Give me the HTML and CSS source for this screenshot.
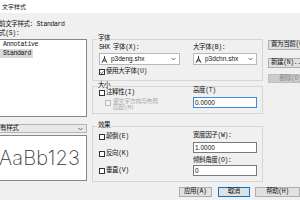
FILE: index.html
```html
<!DOCTYPE html>
<html lang="zh">
<head>
<meta charset="utf-8">
<link rel="stylesheet" href="styles.css">
</head>
<body>
<div class="titlebar">文字样式</div>
<div class="cols">
  <div class="left">
    <div class="lbl">当前文字样式: Standard</div>
    <div class="lbl">样式(S):</div>
    <div class="list">
      <div class="item">Annotative</div>
      <div class="item sel">Standard</div>
    </div>
    <div class="combo allstyles"><span class="ctext">所有样式</span><svg class="chev" width="5" height="4" viewBox="0 0 5 4"><polyline points="0.5,1 2.5,3 4.5,1" fill="none" stroke="#444" stroke-width="0.8"/></svg></div>
    <div class="preview">AaBb123</div>
  </div>

  <div class="mid">
    <div class="group g-font">
      <div class="legend">字体</div>
      <div class="grow">
        <div class="ga">
          <div class="flabel">SHX 字体(X):</div>
          <div class="combo fcombo"><svg class="shx" width="7" height="7" viewBox="0 0 7 7"><path d="M3.5 0.3V2M1 6.7L3.5 2L6 6.7M2.1 4.9H4.9M3 1.2H4" fill="none" stroke="#222" stroke-width="0.9"/></svg><span class="ctext">p3deng.shx</span><svg class="chev" width="5" height="4" viewBox="0 0 5 4"><polyline points="0.5,1 2.5,3 4.5,1" fill="none" stroke="#444" stroke-width="0.8"/></svg></div>
          <div class="chk c-big"><span class="box"><svg width="5" height="5" viewBox="0 0 5 5"><polyline points="0.7,2.5 2,3.9 4.4,1" fill="none" stroke="#222" stroke-width="0.9"/></svg></span>使用大字体(U)</div>
        </div>
        <div class="gb">
          <div class="flabel">大字体(B):</div>
          <div class="combo fcombo"><svg class="shx" width="7" height="7" viewBox="0 0 7 7"><path d="M3.5 0.3V2M1 6.7L3.5 2L6 6.7M2.1 4.9H4.9M3 1.2H4" fill="none" stroke="#222" stroke-width="0.9"/></svg><span class="ctext">p3dchn.shx</span><svg class="chev" width="5" height="4" viewBox="0 0 5 4"><polyline points="0.5,1 2.5,3 4.5,1" fill="none" stroke="#444" stroke-width="0.8"/></svg></div>
        </div>
      </div>
    </div>

    <div class="group g-size">
      <div class="legend">大小</div>
      <div class="grow">
        <div class="ga">
          <div class="chk c-anno"><span class="box"></span>注释性(I)</div>
          <div class="chk c-dis"><span class="box dis"></span><span class="distext">使文字方向与布局<br>匹配(M)</span></div>
        </div>
        <div class="gb">
          <div class="flabel f-h">高度(T)</div>
          <div class="input focus i-h">0.0000</div>
        </div>
      </div>
    </div>

    <div class="group g-eff">
      <div class="legend">效果</div>
      <div class="grow">
        <div class="ga">
          <div class="chk e1"><span class="box"></span>颠倒(E)</div>
          <div class="chk e2"><span class="box"></span>反向(K)</div>
          <div class="chk e3"><span class="box"></span>垂直(V)</div>
        </div>
        <div class="gb">
          <div class="flabel f-w">宽度因子(W):</div>
          <div class="input i-w">1.0000</div>
          <div class="flabel f-o">倾斜角度(O):</div>
          <div class="input i-o">0</div>
        </div>
      </div>
    </div>
  </div>

  <div class="right">
    <div class="btn b-cur">置为当前(C)</div>
    <div class="btn b-new">新建(N)...</div>
    <div class="btn b-del disabled">删除(D)</div>
  </div>
</div>

<div class="footer">
  <div class="btn f-apply">应用(A)</div>
  <div class="btn f-cancel">取消</div>
  <div class="btn f-help">帮助(H)</div>
</div>
</body>
</html>
```

FILE: styles.css
```css
* { box-sizing: border-box; margin: 0; padding: 0; }
html, body { width: 300px; height: 200px; overflow: hidden; }
body {
  background: #f0f0f0;
  font-family: "Liberation Mono", "Noto Sans CJK SC", monospace;
  font-size: 6.5px;
  letter-spacing: -0.4px;
  line-height: 8px;
  color: #111;
}
.titlebar {
  height: 13px;
  background: #fff;
  padding-left: 2px;
  font-family: "Noto Sans CJK SC", sans-serif;
  font-size: 6px;
  letter-spacing: 0;
  line-height: 13px;
}
.cols { display: flex; align-items: flex-start; height: 169px; }

/* left column */
.left { width: 95px; margin-left: -8px; padding-top: 7px; flex: none; }
.lbl { height: 9px; line-height: 9px; white-space: nowrap; padding-left: 1px; }
.list {
  margin-top: 1px;
  height: 78px;
  background: #fff;
  border: 1px solid #828790;
}
.item { height: 9px; line-height: 9px; padding-left: 10px; white-space: nowrap; }
.item.sel { display: table; padding-right: 2px; background: #d9d9d9; }

.combo {
  display: flex;
  align-items: center;
  border: 1px solid #a6a6a6;
  background: #fff;
  white-space: nowrap;
}
.combo .ctext { flex: 1; }
.combo .chev { flex: none; margin-right: 3px; }
.allstyles {
  margin-top: 7px;
  height: 9px;
  background: #e8e8e8;
  border-color: #b4b4b4;
  padding-left: 1px;
}
.preview {
  margin-top: 2px;
  height: 46px;
  background: #fff;
  border: 1px solid #828790;
  font-family: "Inter", "DejaVu Sans", sans-serif;
  font-weight: 200;
  font-size: 20px;
  letter-spacing: 0.2px;
  line-height: 44px;
  text-align: center;
  color: #3a3a3a;
}

/* middle groups */
.mid { width: 171px; margin-left: 5px; flex: none; }
.group { border: 1px solid #d5d5d5; }
.legend {
  width: max-content;
  height: 8px;
  line-height: 8px;
  margin: -5px 0 0 4px;
  padding: 0 1px;
  background: #f0f0f0;
}
.grow { display: flex; padding-left: 6px; gap: 13px; }
.ga { width: 81px; flex: none; }
.gb { width: 64px; flex: none; }
.flabel { height: 8px; line-height: 8px; white-space: nowrap; }

.g-font { margin-top: 26px; height: 42px; }
.g-font .flabel { margin-top: 1px; }
.fcombo { margin-top: 1px; height: 12px; padding-left: 1px; border-color: #b9b9b9; }
.fcombo .shx { flex: none; margin-right: 3px; }
.fcombo .ctext { font-family: "Liberation Sans", "Noto Sans CJK SC", sans-serif; letter-spacing: 0; }
.chk { display: flex; align-items: center; height: 8px; white-space: nowrap; }
.box {
  flex: none;
  width: 6px;
  height: 6px;
  border: 1px solid #333;
  background: #fff;
  margin-right: 1px;
  display: flex;
  align-items: center;
  justify-content: center;
}
.box svg { display: block; }
.box.dis { border-color: #bcbcbc; background: #f4f4f4; }
.c-big { margin-top: 2px; height: 10px; }

.g-size { margin-top: 5px; height: 28px; }
.c-anno { margin-top: -1px; }
.c-dis { margin-top: 2px; align-items: flex-start; padding-left: 6px; height: 12px; }
.c-dis .box { margin-top: 1px; margin-right: 2px; }
.distext { color: #a8a8a8; line-height: 6px; font-size: 6px; }
.f-h { margin-top: -3px; }
.input {
  height: 11px;
  border: 1px solid #7a7a7a;
  background: #fff;
  padding-left: 1px;
  line-height: 9px;
  font-family: "Liberation Sans", sans-serif;
  letter-spacing: 0;
  font-size: 6.5px;
}
.input.focus { border-color: #3c8ed6; }
.i-h { margin-top: 2px; }

.g-eff { margin-top: 12px; height: 56px; }
.e1 { margin-top: 3px; }
.e2 { margin-top: 9px; }
.e3 { margin-top: 9px; }
.f-w { margin-top: 2px; }
.i-w { margin-top: 2px; }
.f-o { margin-top: 4px; }

/* right buttons */
.right { margin-left: 5px; width: 45px; flex: none; }
.btn {
  background: #e1e1e1;
  border: 1px solid #adadad;
  text-align: center;
  white-space: nowrap;
  height: 10px;
  line-height: 8px;
}
.b-cur { margin-top: 27px; text-align: left; padding-left: 2px; }
.b-new { margin-top: 8px; text-align: left; padding-left: 2px; }
.b-del { margin-top: 6px; height: 9px; line-height: 7px; }
.btn.disabled { background: #cccccc; border-color: #bfbfbf; color: #8a8a8a; }

.footer { display: flex; padding-left: 179px; margin-top: 5px; }
.f-apply { width: 39px; }
.f-cancel { width: 39px; margin-left: 6px; border-color: #0078d7; }
.f-help { width: 45px; margin-left: 5px; flex: none; }
```
